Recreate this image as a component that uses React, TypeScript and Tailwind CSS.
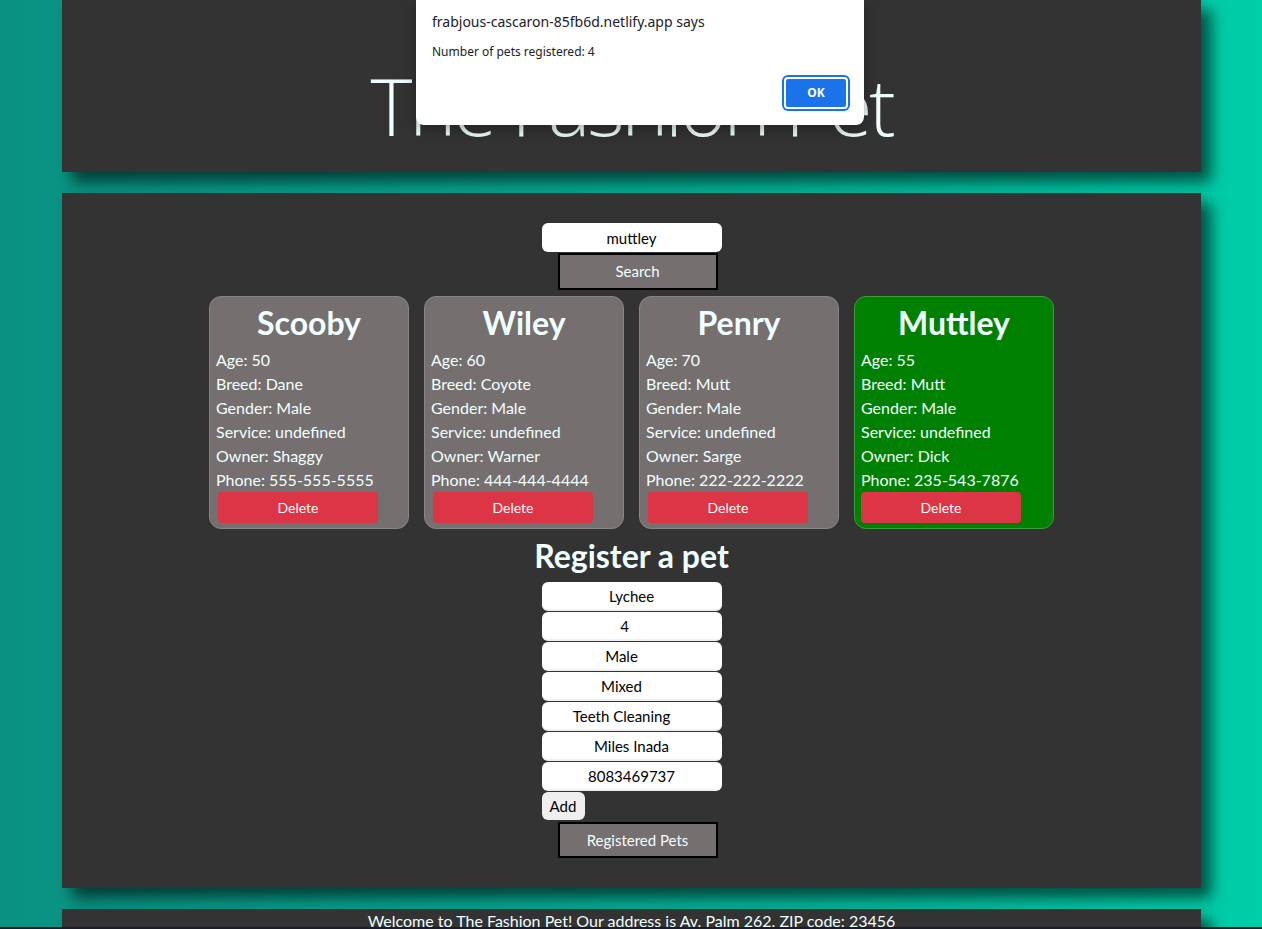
import React from "react";

type Pet = {
  name: string;
  age: number;
  breed: string;
  gender: string;
  owner: string;
  phone: string;
  highlight?: boolean;
};

const pets: Pet[] = [
  { name: "Scooby", age: 50, breed: "Dane", gender: "Male", owner: "Shaggy", phone: "555-555-5555" },
  { name: "Wiley", age: 60, breed: "Coyote", gender: "Male", owner: "Warner", phone: "444-444-4444" },
  { name: "Penry", age: 70, breed: "Mutt", gender: "Male", owner: "Sarge", phone: "222-222-2222" },
  { name: "Muttley", age: 55, breed: "Mutt", gender: "Male", owner: "Dick", phone: "235-543-7876", highlight: true },
];

const formValues: { v: string; cls: string }[] = [
  { v: "Lychee", cls: "pr-0" },
  { v: "4", cls: "pr-[14px]" },
  { v: "Male", cls: "pr-[20px]" },
  { v: "Mixed", cls: "pr-[20px]" },
  { v: "Teeth Cleaning", cls: "pr-[20px]" },
  { v: "Miles Inada", cls: "pr-0" },
  { v: "8083469737", cls: "pr-0" },
];

function PetCard({ pet }: { pet: Pet }) {
  return (
    <div
      className={
        pet.highlight
          ? "w-[200px] h-[233px] rounded-xl border border-[#3f9a3f] bg-[#008000] flex flex-col"
          : "w-[200px] h-[233px] rounded-xl border border-[#8a8484] bg-[#766f6f] flex flex-col"
      }
    >
      <h2 className="pt-0 text-center text-[32px] leading-[51px] font-bold text-[#f0ffff]">{pet.name}</h2>
      <div className="px-[6px] text-[16px] leading-[24px] text-[#f0ffff]">
        <p>Age: {pet.age}</p>
        <p>Breed: {pet.breed}</p>
        <p>Gender: {pet.gender}</p>
        <p>Service: undefined</p>
        <p>Owner: {pet.owner}</p>
        <p>Phone: {pet.phone}</p>
      </div>
      <button className={pet.highlight ? "ml-[6px] w-[160px] h-[31px] rounded bg-[#dc3545] text-[14px] text-white" : "ml-2 w-[160px] h-[31px] rounded bg-[#dc3545] text-[14px] text-white"}>
        Delete
      </button>
    </div>
  );
}

export default function App() {
  return (
    <div
      className="relative min-h-[929px] bg-gradient-to-r from-[#0a9181] to-[#00cea9] pl-[62px] pr-[61px] pb-4 text-[#f0ffff]"
      style={{ fontFamily: "Lato, 'Noto Sans', sans-serif" }}
    >
      {/* Header */}
      <header className="h-[172px] bg-[#333333] shadow-[10px_10px_14px_rgba(0,0,0,0.6)] pt-[65px] text-center">
        <h1
          className="text-[80px] leading-none tracking-[-3.3px] text-[#f0ffff]"
          style={{ fontFamily: "'Open Sans', Lato, sans-serif", fontWeight: 300 }}
        >
          The Fashion Pet
        </h1>
      </header>

      {/* Main panel */}
      <main className="mt-[21px] bg-[#333333] shadow-[10px_10px_14px_rgba(0,0,0,0.6)] pt-[30px] pb-[30px] flex flex-col items-center">
        <input
          readOnly
          value="muttley"
          className="w-[180px] h-[29px] rounded-md bg-white text-center text-[15px] text-black outline-none"
        />
        <button className="ml-3 mt-px w-[160px] h-[37px] border-2 border-black bg-[#766f6f] text-[15px] text-[#f0ffff]">
          Search
        </button>

        <div className="mt-[6px] flex gap-[15px]">
          {pets.map((p) => (
            <PetCard key={p.name} pet={p} />
          ))}
        </div>

        <h2 className="h-[53px] flex items-center text-[32px] font-bold text-[#f0ffff]">Register a pet</h2>

        <div className="w-[180px] flex flex-col items-start gap-px">
          {formValues.map(({ v, cls }) => (
            <input
              key={v}
              readOnly
              value={v}
              className={"w-[180px] h-[29px] rounded-md border-b-2 border-[#f0f0f0] bg-white text-center text-[15px] text-black outline-none " + cls}
            />
          ))}
          <button className="h-[28px] w-[43px] rounded-md bg-[#efefef] text-[15px] text-black">Add</button>
        </div>
        <button className="ml-3 mt-[2px] w-[160px] h-[36px] border-2 border-black bg-[#766f6f] text-[15px] text-[#f0ffff]">
          Registered Pets
        </button>
      </main>

      {/* Footer */}
      <footer className="mt-[21px] h-[40px] bg-[#333333] shadow-[10px_10px_14px_rgba(0,0,0,0.6)] pt-0 leading-[24px] text-center text-[16px] text-[#f0ffff]">
        Welcome to The Fashion Pet! Our address is Av. Palm 262. ZIP code: 23456
      </footer>

      {/* Alert dialog */}
      <div className="absolute left-[416px] top-0 w-[448px] h-[125px] rounded-b-lg bg-white shadow-[0_4px_16px_rgba(0,0,0,0.35)] px-4 pt-[12px]" style={{ fontFamily: "'Noto Sans', sans-serif" }}>
        <p className="text-[14px] leading-5 text-[#202124]">frabjous-cascaron-85fb6d.netlify.app says</p>
        <p className="mt-[12px] text-[12px] leading-4 text-[#202124]">Number of pets registered: 4</p>
        <div className="mt-[17px] flex justify-end">
          <button className="w-[64px] h-[32px] rounded bg-[#1a73e8] ring-2 ring-[#1a73e8] border-2 border-white text-[12px] font-bold text-white">
            OK
          </button>
        </div>
      </div>

      {/* bottom edge */}
      <div className="fixed left-0 right-0 bottom-0 h-[2px] bg-[#1b1b2b]" />
    </div>
  );
}
